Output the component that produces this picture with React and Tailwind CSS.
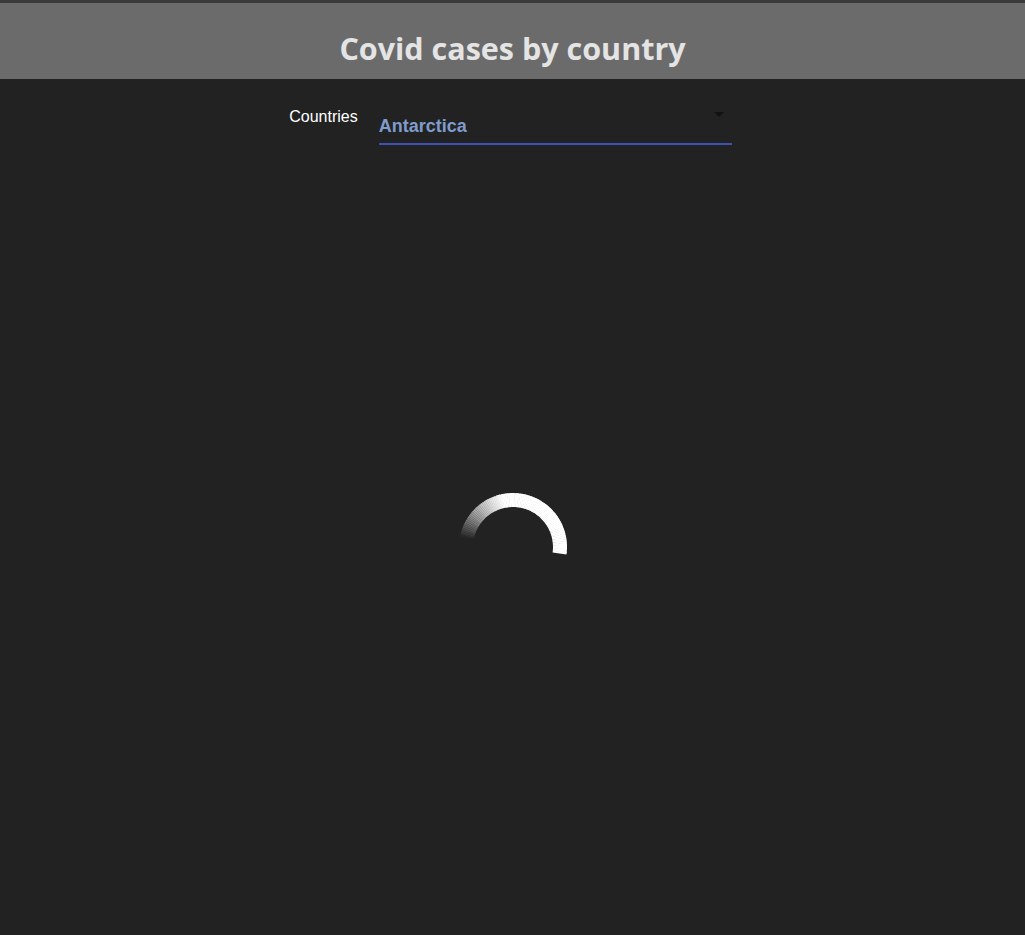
import React from 'react';

function Spinner() {
  // arc drawn as short segments so its tail can fade out
  const segs = [];
  const cx = 56, cy = 56, r = 47;
  const start = 8, end = -168, step = -2;
  for (let a = start; a > end; a += step) {
    const a1 = (a * Math.PI) / 180;
    const a2 = ((a + step - 0.6) * Math.PI) / 180;
    const x1 = cx + r * Math.cos(a1), y1 = cy + r * Math.sin(a1);
    const x2 = cx + r * Math.cos(a2), y2 = cy + r * Math.sin(a2);
    let op = 1;
    if (a < -100) op = Math.max(0, 1 - (-100 - a) / 68);
    segs.push(
      <path key={a} d={`M${x1} ${y1} A${r} ${r} 0 0 0 ${x2} ${y2}`} stroke="#ffffff" strokeOpacity={op} strokeWidth="14" fill="none" />
    );
  }
  return (
    <svg width="112" height="112" viewBox="0 0 112 112">
      {segs}
    </svg>
  );
}

export default function App() {
  return (
    <div className="min-h-[935px] bg-[#222222] border-t-[3px] border-[#3a3a3a] font-['Liberation_Sans',Arial,sans-serif]">
      <header className="h-[76px] bg-[#6b6b6b] flex items-end justify-center pb-[7px]">
        <h1 className="text-[30.5px] font-bold text-[#e4e4e4] font-['Open_Sans',sans-serif]">
          Covid cases by country
        </h1>
      </header>

      <div className="flex justify-center pt-[29px] pr-[4px]">
        <label className="text-white text-[16px] leading-[18px] mr-[21px]">Countries</label>
        <div className="w-[353px] relative border-b-2 border-[#3f51b5] pt-[7px] pb-[4px]">
          <span className="text-[18px] leading-[20px] font-bold text-[#7f9ccd]">Antarctica</span>
          <span className="absolute right-[8px] top-[4px] w-0 h-0 border-l-[5px] border-r-[5px] border-t-[5px] border-l-transparent border-r-transparent border-t-[#111111]" />
        </div>
      </div>

      <div className="flex justify-center mt-[346px]">
        <Spinner />
      </div>
    </div>
  );
}
